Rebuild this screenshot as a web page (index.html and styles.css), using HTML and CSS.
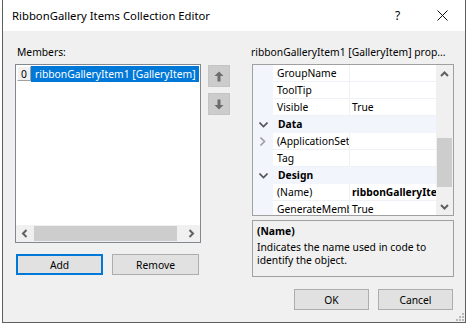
FILE: index.html
```html
<!DOCTYPE html>
<html lang="en">
<head>
    <meta charset="UTF-8">
    <title>RibbonGallery Items Collection Editor</title>
    <link rel="stylesheet" href="styles.css">
</head>
<body>
    <div class="window">
        <div class="titlebar">
            <span class="title">RibbonGallery Items Collection Editor</span>
            <span class="caption-btn help">?</span>
            <span class="caption-btn close">
                <svg width="11" height="11" viewBox="0 0 11 11"><path d="M0.5 0.5 L10.5 10.5 M10.5 0.5 L0.5 10.5" stroke="#111" stroke-width="1"/></svg>
            </span>
        </div>

        <div class="content">
            <div class="panes">
                <div class="left">
                    <div class="label">Members:</div>
                    <div class="members-row">
                        <div class="listbox">
                            <div class="list-items">
                                <div class="list-item">
                                    <span class="index">0</span>
                                    <span class="item-text">ribbonGalleryItem1 [GalleryItem]</span>
                                </div>
                            </div>
                            <div class="hscroll">
                                <div class="sb-arrow">
                                    <svg width="7" height="9" viewBox="0 0 7 9"><path d="M5.5 1 L2 4.5 L5.5 8" fill="none" stroke="#606060" stroke-width="2"/></svg>
                                </div>
                                <div class="sb-thumb"></div>
                                <div class="sb-track"></div>
                                <div class="sb-arrow">
                                    <svg width="7" height="9" viewBox="0 0 7 9"><path d="M1.5 1 L5 4.5 L1.5 8" fill="none" stroke="#606060" stroke-width="2"/></svg>
                                </div>
                            </div>
                        </div>
                        <div class="order-buttons">
                            <div class="order-btn">
                                <svg width="10" height="11" viewBox="0 0 10 11"><path d="M5 0.5 L9.5 5 L6.5 5 L6.5 10.5 L3.5 10.5 L3.5 5 L0.5 5 Z" fill="#6d6d6d"/></svg>
                            </div>
                            <div class="order-btn">
                                <svg width="10" height="11" viewBox="0 0 10 11"><path d="M5 10.5 L9.5 6 L6.5 6 L6.5 0.5 L3.5 0.5 L3.5 6 L0.5 6 Z" fill="#6d6d6d"/></svg>
                            </div>
                        </div>
                    </div>
                    <div class="member-actions">
                        <button class="btn btn-focus">Add</button>
                        <button class="btn">Remove</button>
                    </div>
                </div>

                <div class="right">
                    <div class="label label-props">ribbonGalleryItem1 [GalleryItem] prop...</div>
                    <div class="propgrid">
                        <div class="prop-rows">
                            <div class="prop-row"><span class="gutter"></span><span class="pname">GroupName</span><span class="pvalue"></span></div>
                            <div class="prop-row"><span class="gutter"></span><span class="pname">ToolTip</span><span class="pvalue"></span></div>
                            <div class="prop-row"><span class="gutter"></span><span class="pname">Visible</span><span class="pvalue">True</span></div>
                            <div class="prop-row category">
                                <span class="gutter"><svg width="9" height="6" viewBox="0 0 9 6"><path d="M0.5 0.5 L4.5 4.5 L8.5 0.5" fill="none" stroke="#555" stroke-width="1.6"/></svg></span>
                                <span class="cname">Data</span>
                            </div>
                            <div class="prop-row">
                                <span class="gutter"><svg width="6" height="9" viewBox="0 0 6 9"><path d="M0.5 0.5 L4.5 4.5 L0.5 8.5" fill="none" stroke="#a0a0a0" stroke-width="1.6"/></svg></span>
                                <span class="pname">(ApplicationSettings)</span><span class="pvalue"></span>
                            </div>
                            <div class="prop-row"><span class="gutter"></span><span class="pname">Tag</span><span class="pvalue"></span></div>
                            <div class="prop-row category">
                                <span class="gutter"><svg width="9" height="6" viewBox="0 0 9 6"><path d="M0.5 0.5 L4.5 4.5 L8.5 0.5" fill="none" stroke="#555" stroke-width="1.6"/></svg></span>
                                <span class="cname">Design</span>
                            </div>
                            <div class="prop-row"><span class="gutter"></span><span class="pname">(Name)</span><span class="pvalue bold">ribbonGalleryItem1</span></div>
                            <div class="prop-row"><span class="gutter"></span><span class="pname">GenerateMember</span><span class="pvalue">True</span></div>
                        </div>
                        <div class="vscroll">
                            <div class="vs-arrow">
                                <svg width="9" height="6" viewBox="0 0 9 6"><path d="M1 5 L4.5 1.5 L8 5" fill="none" stroke="#606060" stroke-width="2"/></svg>
                            </div>
                            <div class="vs-thumb"></div>
                            <div class="vs-track"></div>
                            <div class="vs-arrow">
                                <svg width="9" height="6" viewBox="0 0 9 6"><path d="M1 1 L4.5 4.5 L8 1" fill="none" stroke="#606060" stroke-width="2"/></svg>
                            </div>
                        </div>
                    </div>
                    <div class="desc">
                        <div class="desc-title">(Name)</div>
                        <div class="desc-text">Indicates the name used in code to identify the object.</div>
                    </div>
                </div>
            </div>

            <div class="footer">
                <button class="btn btn-wide">OK</button>
                <button class="btn btn-wide">Cancel</button>
            </div>
        </div>

        <svg class="grip" width="8" height="8" viewBox="0 0 8 8">
            <rect x="6" y="0" width="2" height="2" fill="#b8b8b8"/>
            <rect x="3" y="3" width="2" height="2" fill="#b8b8b8"/>
            <rect x="6" y="3" width="2" height="2" fill="#b8b8b8"/>
            <rect x="0" y="6" width="2" height="2" fill="#b8b8b8"/>
            <rect x="3" y="6" width="2" height="2" fill="#b8b8b8"/>
            <rect x="6" y="6" width="2" height="2" fill="#b8b8b8"/>
        </svg>
    </div>
</body>
</html>
```

FILE: styles.css
```css
body {
    margin: 0;
    background: #fff;
    font-family: "Noto Sans", "Open Sans", sans-serif;
    font-size: 10.3px;
    color: #000;
}
.window {
    position: relative;
    box-sizing: border-box;
    width: 464px;
    height: 323px;
    margin-left: 2px;
    border: 1px solid #5f5f5f;
    border-top: none;
    background: #f0f0f0;
    display: flex;
    flex-direction: column;
}

/* title bar */
.titlebar {
    height: 31px;
    background: #fff;
    display: flex;
    align-items: center;
    padding-left: 9px;
}
.title {
    font-size: 11.3px;
    flex: 1;
}
.caption-btn {
    width: 45px;
    height: 31px;
    display: flex;
    align-items: center;
    justify-content: center;
}
.help {
    font-size: 12px;
}

/* content */
.content {
    flex: 1;
    display: flex;
    flex-direction: column;
    padding: 12px 11px 0 12px;
}
.panes {
    display: flex;
    gap: 22px;
}
.left {
    width: 215px;
}
.right {
    width: 202px;
}
.label {
    height: 16px;
    line-height: 18px;
    margin-bottom: 5px;
    margin-left: 2px;
    white-space: nowrap;
}
.label-props {
    margin-left: -1px;
}

/* members list */
.members-row {
    display: flex;
}
.listbox {
    box-sizing: border-box;
    width: 186px;
    height: 179px;
    border: 1px solid #828790;
    background: #fff;
    display: flex;
    flex-direction: column;
}
.list-items {
    flex: 1;
    padding: 1px;
}
.list-item {
    display: flex;
    height: 16px;
}
.index {
    box-sizing: border-box;
    width: 14px;
    height: 15px;
    background: #f0f0f0;
    border: 1px solid;
    border-color: #fff #a0a0a0 #a0a0a0 #fff;
    text-align: center;
    line-height: 14px;
}
.item-text {
    flex: 1;
    background: #0078d7;
    color: #fff;
    padding-left: 4px;
    line-height: 17px;
    white-space: nowrap;
    overflow: hidden;
}
.hscroll {
    height: 17px;
    display: flex;
    background: #f0f0f0;
}
.sb-arrow {
    width: 17px;
    display: flex;
    align-items: center;
    justify-content: center;
}
.sb-thumb {
    width: 143px;
    margin: 1px 0 1px 1px;
    background: #cdcdcd;
}
.sb-track {
    flex: 1;
}
.order-buttons {
    display: flex;
    flex-direction: column;
    gap: 6px;
    margin: 1px 0 0 7px;
}
.order-btn {
    box-sizing: border-box;
    width: 22px;
    height: 22px;
    background: #cccccc;
    border: 1px solid #c4c4c4;
    display: flex;
    align-items: center;
    justify-content: center;
}

/* buttons */
.member-actions {
    display: flex;
    gap: 9px;
    margin: 11px 0 0 1px;
}
.btn {
    box-sizing: border-box;
    width: 87px;
    height: 21px;
    padding: 1px 0 0;
    background: #e1e1e1;
    border: 1px solid #adadad;
    font-family: inherit;
    font-size: 10.3px;
    color: #000;
}
.btn-focus {
    border: 2px solid #0078d7;
}
.btn-wide {
    width: 75px;
}

/* property grid */
.propgrid {
    box-sizing: border-box;
    height: 152px;
    border: 1px solid #a0a0a0;
    background: #fff;
    display: flex;
}
.prop-rows {
    flex: 1;
    overflow: hidden;
}
.prop-row {
    display: grid;
    grid-template-columns: 20px 77px 1fr;
    height: 17px;
    line-height: 17px;
}
.gutter {
    background: #f2f5fb;
    display: flex;
    align-items: center;
    justify-content: center;
}
.pname,
.pvalue {
    box-sizing: border-box;
    height: 17px;
    border-bottom: 1px solid #eef1f6;
    white-space: nowrap;
    overflow: hidden;
}
.pname {
    padding-left: 4px;
    border-right: 1px solid #eef1f6;
}
.pvalue {
    padding-left: 2px;
}
.bold {
    font-weight: bold;
}
.category {
    background: #f2f5fb;
}
.cname {
    grid-column: 2 / 4;
    padding-left: 5px;
    font-weight: bold;
}
.vscroll {
    width: 17px;
    background: #f0f0f0;
    display: flex;
    flex-direction: column;
}
.vs-arrow {
    height: 17px;
    display: flex;
    align-items: center;
    justify-content: center;
}
.vs-thumb {
    height: 49px;
    margin: 56px 1px 0 1px;
    background: #cdcdcd;
}
.vs-track {
    flex: 1;
}

/* description */
.desc {
    box-sizing: border-box;
    height: 57px;
    margin-top: 4px;
    border: 1px solid #a0a0a0;
    padding: 2px 4px 0;
}
.desc-title {
    font-weight: bold;
    line-height: 16px;
}
.desc-text {
    margin-top: 2px;
    line-height: 13px;
}

/* footer */
.footer {
    display: flex;
    justify-content: flex-end;
    gap: 9px;
    margin: 12px 1px 0 0;
}

.grip {
    position: absolute;
    right: 1px;
    bottom: 1px;
}
```
